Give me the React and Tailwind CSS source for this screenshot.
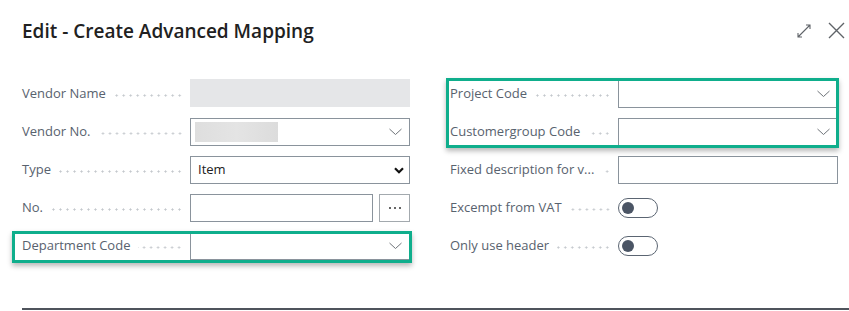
import React from 'react';

const Dots = () => (
    <span className="flex-1 ml-[8px] mt-[3px] h-[3px] bg-[radial-gradient(circle,#c3c7cc_0.9px,transparent_1.2px)] bg-[length:7px_3px] bg-repeat-x bg-right" />
);

const Chevron = () => (
    <svg width="13" height="8" viewBox="0 0 13 8" className="shrink-0">
        <path d="M0.5 1 L6.5 6.5 L12.5 1" fill="none" stroke="#6f747a" strokeWidth="1" />
    </svg>
);

const Field = ({ label, children }) => (
    <div className="flex items-center h-[28px]">
        <div className="w-[168px] flex items-center pr-[7px] text-[13px] text-[#58626e] whitespace-nowrap">
            <span>{label}</span>
            <Dots />
        </div>
        <div className="w-[220px] h-full flex">{children}</div>
    </div>
);

const Dropdown = ({ children }) => (
    <div className="w-full h-full border border-[#8a939c] bg-white flex items-center justify-between pl-[4px] pr-[7px]">
        <div>{children}</div>
        <Chevron />
    </div>
);

const Toggle = () => (
    <div className="w-[40px] h-[20px] rounded-full border-[1.5px] border-[#5b6572] flex items-center self-center">
        <span className="w-[12px] h-[12px] rounded-full bg-[#4b5565] ml-[3px]" />
    </div>
);

const Highlight = ({ className }) => (
    <div className={`absolute pointer-events-none border-[3px] border-[#0fae8c] shadow-[0_3px_5px_rgba(0,0,0,0.28)] ${className}`} />
);

export default function App() {
    return (
        <div className="w-[849px] h-[311px] bg-white font-['Open_Sans',sans-serif] flex flex-col overflow-hidden">
            {/* Header */}
            <div className="flex items-start justify-between pl-[22px] pr-[4px] pt-[18px] h-[80px]">
                <h1 className="text-[19px] font-semibold text-[#212121] leading-[26px]">
                    Edit - Create Advanced Mapping
                </h1>
                <div className="flex items-center gap-[16px] mt-[4px]">
                    <svg width="16" height="16" viewBox="0 0 16 16">
                        <path d="M2 14 L14 2 M2 10 V14 H6 M10 2 H14 V6" fill="none" stroke="#5f6368" strokeWidth="1.1" />
                    </svg>
                    <svg width="17" height="17" viewBox="0 0 17 17">
                        <path d="M1 1 L16 16 M16 1 L1 16" fill="none" stroke="#5f6368" strokeWidth="1.4" />
                    </svg>
                </div>
            </div>

            {/* Form */}
            <div className="flex pl-[22px] gap-[40px]">
                <div className="w-[388px] flex flex-col gap-[10px]">
                    <Field label="Vendor Name">
                        <div className="w-full h-full bg-[#e5e6e8] -mt-[1px]" />
                    </Field>
                    <Field label="Vendor No.">
                        <Dropdown>
                            <div className="w-[83px] h-[20px] bg-[linear-gradient(90deg,#dedede,#e4e4e4,#dcdcdc)]" />
                        </Dropdown>
                    </Field>
                    <Field label="Type">
                        <div className="w-full h-full border border-[#8a939c] flex items-center justify-between pl-[7px] pr-[5px] text-[13px] text-[#212121]">
                            <span>Item</span>
                            <svg width="10" height="7" viewBox="0 0 10 7">
                                <path d="M1 1.2 L5 5.2 L9 1.2" fill="none" stroke="#111" strokeWidth="2.2" />
                            </svg>
                        </div>
                    </Field>
                    <Field label="No.">
                        <div className="flex-1 h-full border border-[#8a939c]" />
                        <div className="w-[31px] h-full ml-[6px] border border-[#a3a9ae] flex items-center justify-center gap-[3px]">
                            <span className="w-[2px] h-[2px] rounded-full bg-[#333]" />
                            <span className="w-[2px] h-[2px] rounded-full bg-[#333]" />
                            <span className="w-[2px] h-[2px] rounded-full bg-[#333]" />
                        </div>
                    </Field>
                    <div className="relative">
                        <Field label="Department Code">
                            <Dropdown />
                        </Field>
                        <Highlight className="-left-[10px] -right-[2px] -top-[1px] -bottom-[3px]" />
                    </div>
                </div>

                <div className="w-[388px] flex flex-col gap-[10px]">
                    <div className="relative flex flex-col gap-[10px]">
                        <Field label="Project Code">
                            <Dropdown />
                        </Field>
                        <Field label="Customergroup Code">
                            <Dropdown />
                        </Field>
                        <Highlight className="-left-[4px] -right-[1px] -top-[2px] -bottom-[2px]" />
                    </div>
                    <Field label="Fixed description for v...">
                        <div className="w-full h-full border border-[#8a939c]" />
                    </Field>
                    <Field label="Excempt from VAT">
                        <Toggle />
                    </Field>
                    <Field label="Only use header">
                        <Toggle />
                    </Field>
                </div>
            </div>

            {/* Footer divider */}
            <div className="mt-auto ml-[22px] mb-[1px] h-[2px] bg-[#4f545c]" />
        </div>
    );
}
